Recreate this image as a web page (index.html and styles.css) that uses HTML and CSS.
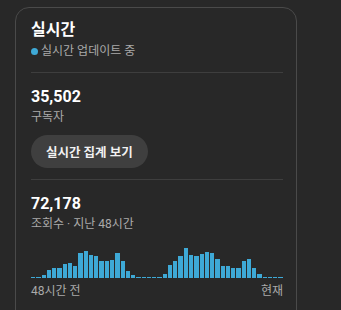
FILE: index.html
```html
<!DOCTYPE html>
<html lang="ko">
<head>
<meta charset="utf-8">
<link rel="stylesheet" href="styles.css">
</head>
<body>
<div class="card">
  <div class="title">실시간</div>
  <div class="live"><span class="dot"></span>실시간 업데이트 중</div>
  <div class="divider first"></div>
  <div class="num">35,502</div>
  <div class="label">구독자</div>
  <button class="btn">실시간 집계 보기</button>
  <div class="divider second"></div>
  <div class="num">72,178</div>
  <div class="label">조회수 · 지난 48시간</div>
  <div class="chart">
    <div class="bar" style="height:1px"></div>
    <div class="bar" style="height:1.5px"></div>
    <div class="bar" style="height:3.5px"></div>
    <div class="bar" style="height:8px"></div>
    <div class="bar" style="height:10px"></div>
    <div class="bar" style="height:10px"></div>
    <div class="bar" style="height:14px"></div>
    <div class="bar" style="height:15px"></div>
    <div class="bar" style="height:12px"></div>
    <div class="bar" style="height:25px"></div>
    <div class="bar" style="height:27px"></div>
    <div class="bar" style="height:23px"></div>
    <div class="bar" style="height:22px"></div>
    <div class="bar" style="height:17px"></div>
    <div class="bar" style="height:17.5px"></div>
    <div class="bar" style="height:18px"></div>
    <div class="bar" style="height:25px"></div>
    <div class="bar" style="height:17.5px"></div>
    <div class="bar" style="height:7px"></div>
    <div class="bar" style="height:3.5px"></div>
    <div class="bar" style="height:1.5px"></div>
    <div class="bar" style="height:1px"></div>
    <div class="bar" style="height:1px"></div>
    <div class="bar" style="height:1px"></div>
    <div class="bar" style="height:1px"></div>
    <div class="bar" style="height:4.5px"></div>
    <div class="bar" style="height:13px"></div>
    <div class="bar" style="height:17px"></div>
    <div class="bar" style="height:22px"></div>
    <div class="bar" style="height:30px"></div>
    <div class="bar" style="height:23px"></div>
    <div class="bar" style="height:22px"></div>
    <div class="bar" style="height:24px"></div>
    <div class="bar" style="height:26px"></div>
    <div class="bar" style="height:25px"></div>
    <div class="bar" style="height:19px"></div>
    <div class="bar" style="height:12px"></div>
    <div class="bar" style="height:12px"></div>
    <div class="bar" style="height:10px"></div>
    <div class="bar" style="height:10px"></div>
    <div class="bar" style="height:17px"></div>
    <div class="bar" style="height:19px"></div>
    <div class="bar" style="height:10px"></div>
    <div class="bar" style="height:4.5px"></div>
    <div class="bar" style="height:1.5px"></div>
    <div class="bar" style="height:1px"></div>
    <div class="bar" style="height:1px"></div>
    <div class="bar" style="height:1px"></div>
  </div>
  <div class="axis"><span>48시간 전</span><span>현재</span></div>
</div>
</body>
</html>
```

FILE: styles.css
```css
html, body {
  margin: 0;
  padding: 0;
  background: #282828;
  height: 100%;
  overflow: hidden;
}
body {
  padding: 7px 0 0 15px;
  font-family: Roboto, "Noto Sans CJK KR", sans-serif;
  color: #fff;
}
.card {
  width: 252px;
  min-height: 400px;
  border: 1px solid #4a4a4a;
  border-radius: 14px;
  padding: 12px 13px 0 15px;
  background: #282828;
}
.title {
  font-size: 16px;
  font-weight: 700;
  line-height: 20px;
}
.live {
  display: flex;
  align-items: center;
  font-size: 12px;
  line-height: 16px;
  color: #aaaaaa;
  margin-top: 3px;
}
.dot {
  width: 7px;
  height: 7px;
  border-radius: 50%;
  background: #3ea9d6;
  margin-right: 3px;
}
.divider {
  height: 1px;
  background: #3e3e3e;
}
.divider.first {
  margin: 13px 0 14px;
}
.divider.second {
  margin: 11px 0 14px;
}
.num {
  font-size: 16px;
  font-weight: 700;
  line-height: 20px;
}
.label {
  font-size: 12px;
  line-height: 16px;
  color: #aaaaaa;
  margin-top: 2px;
}
.btn {
  display: block;
  margin-top: 10px;
  height: 33px;
  padding: 0 15px;
  border: none;
  border-radius: 17px;
  background: #3f3f3f;
  color: #f1f1f1;
  font-family: Roboto, "Noto Sans CJK KR", sans-serif;
  font-size: 12.5px;
  font-weight: 700;
}
.chart {
  display: flex;
  align-items: flex-end;
  gap: 1px;
  height: 31px;
  margin-top: 15px;
}
.bar {
  flex: 1;
  background: #3ea9d6;
}
.axis {
  display: flex;
  justify-content: space-between;
  font-size: 12px;
  line-height: 16px;
  color: #aaaaaa;
  margin-top: 5px;
}
```
